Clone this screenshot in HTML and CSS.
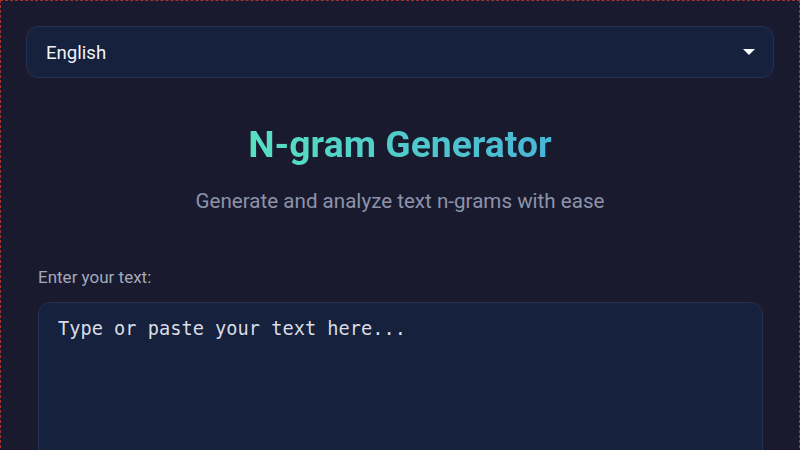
FILE: index.html
```html
<!DOCTYPE html>
<html lang="en">

<head>
    <meta charset="UTF-8">
    <meta name="viewport" content="width=device-width, initial-scale=1.0">
    <title>N-gram Generator</title>
    <link rel="stylesheet" href="styles.css">
</head>

<body>
    <div class="container">
        <div class="lang-select">
            <select id="languageSelect">
                <option value="en" selected>English</option>
                <option value="es">Español</option>
                <option value="fr">Français</option>
                <option value="de">Deutsch</option>
            </select>
        </div>

        <header class="header">
            <h1 class="title">N-gram Generator</h1>
            <p class="subtitle">Generate and analyze text n-grams with ease</p>
        </header>

        <section class="input-section">
            <label for="textInput">Enter your text:</label>
            <textarea id="textInput" placeholder="Type or paste your text here..."></textarea>
        </section>
    </div>
</body>

</html>
```

FILE: styles.css
```css
* {
    box-sizing: border-box;
}

html {
    background-color: #0d2a26;
}

body {
    font-family: Roboto, "Liberation Sans", Arial, sans-serif;
    margin: 0;
    min-height: 100vh;
    background-color: #1a1a2e;
    color: #e6e8ee;
    border: 1px dashed #a8302e;
}

.container {
    padding: 25px;
}

.lang-select {
    position: relative;
}

.lang-select select {
    appearance: none;
    -webkit-appearance: none;
    display: block;
    width: 100%;
    height: 52px;
    padding: 2px 19px 0;
    font-family: inherit;
    font-size: 18.6px;
    color: #f2f3f7;
    background-color: #16213e;
    border: 1px solid #26304f;
    border-radius: 12px;
    outline: none;
    cursor: pointer;
}

.lang-select::after {
    content: "";
    position: absolute;
    right: 19px;
    top: 50%;
    transform: translateY(-50%);
    border-left: 6px solid transparent;
    border-right: 6px solid transparent;
    border-top: 6px solid #ffffff;
    pointer-events: none;
}

.header {
    text-align: center;
    margin-top: 44px;
}

.title {
    margin: 0;
    font-size: 37.3px;
    font-weight: 700;
    line-height: 44px;
    background: linear-gradient(90deg, #58e0c0, #48b6d6);
    -webkit-background-clip: text;
    background-clip: text;
    color: transparent;
    display: inline-block;
}

.subtitle {
    margin: 23px 0 0;
    font-size: 20.6px;
    color: #8c93aa;
}

.input-section {
    margin: 54px 11px 0 12px;
}

.input-section label {
    display: block;
    font-size: 17px;
    color: #a3a9bb;
    margin-bottom: 15px;
}

.input-section textarea {
    display: block;
    width: 100%;
    height: 220px;
    padding: 15px 19px;
    font-family: "DejaVu Sans Mono", monospace;
    font-size: 18.65px;
    color: #e6e8ee;
    background-color: #16213e;
    border: 1px solid #26304f;
    border-radius: 12px;
    resize: vertical;
    outline: none;
}

.input-section textarea::placeholder {
    color: #dadde4;
}
```
